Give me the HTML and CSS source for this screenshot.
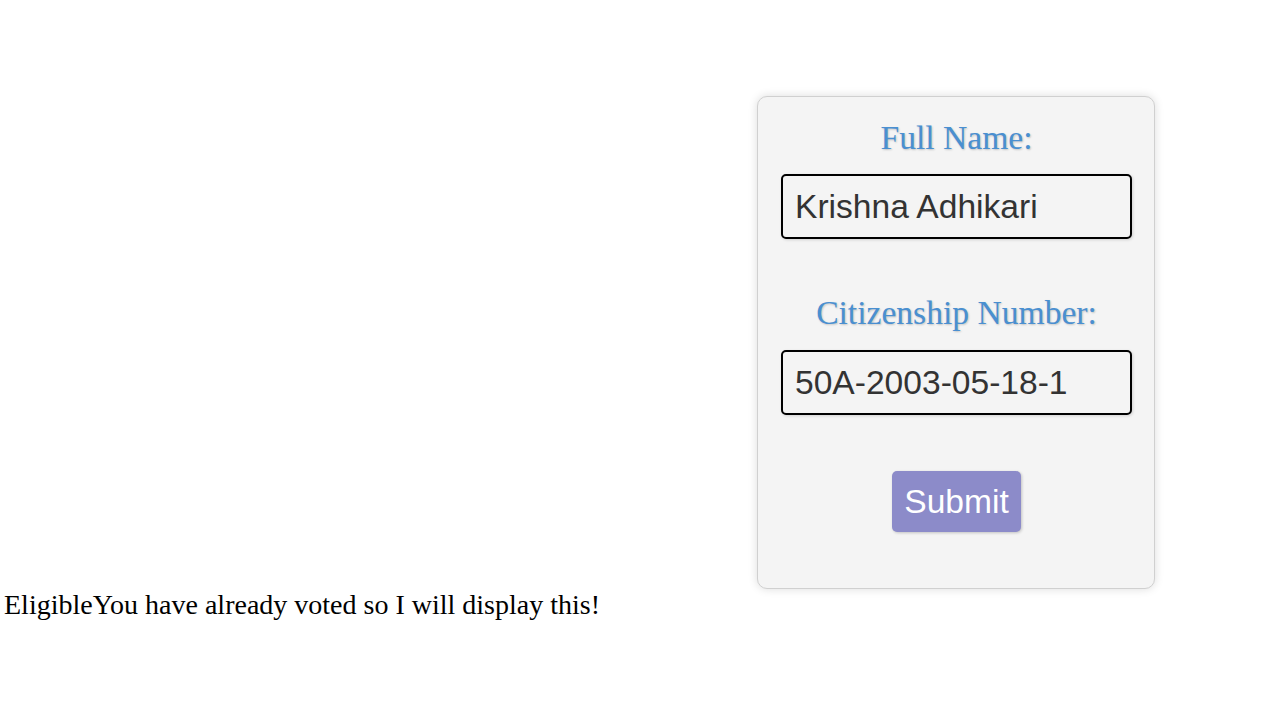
FILE: index.html
```html
<!DOCTYPE html>
<html lang="en">
<head>
<meta charset="utf-8">
<title>Voter Check</title>
<link rel="stylesheet" href="styles.css">
</head>
<body>
<main class="page">
  <div class="stage">
    <form class="card">
      <label class="label" for="name">Full Name:</label>
      <input class="field" id="name" type="text" value="Krishna Adhikari">
      <label class="label label-next" for="cit">Citizenship Number:</label>
      <input class="field" id="cit" type="text" value="50A-2003-05-18-1">
      <div class="actions">
        <button class="submit" type="button">Submit</button>
      </div>
    </form>
  </div>
  <p class="status">EligibleYou have already voted so I will display this!</p>
</main>
</body>
</html>
```
FILE: styles.css
```css
html, body {
  margin: 0;
  padding: 0;
  background: #ffffff;
}

.page {
  font-family: "Liberation Serif", "Times New Roman", serif;
}

.stage {
  display: flex;
  justify-content: flex-end;
  padding: 96px 106px 0 0;
}

.card {
  box-sizing: border-box;
  width: 398px;
  height: 493px;
  padding: 22px 22px 0 23px;
  background: #f4f4f4;
  border: 1px solid #d0d0d0;
  border-radius: 10px;
  box-shadow: 0 0 10px rgba(0, 0, 0, 0.14);
  display: flex;
  flex-direction: column;
}

.label {
  display: block;
  text-align: center;
  font-family: "Liberation Serif", "Times New Roman", serif;
  font-size: 33.6px;
  line-height: 37px;
  color: #4a8fd0;
  text-shadow: 1px 1px 2px rgba(0, 0, 0, 0.2);
  margin-bottom: 18px;
}

.label-next {
  margin-top: 55px;
  margin-bottom: 19px;
}

.field {
  box-sizing: border-box;
  width: 351px;
  height: 65px;
  margin: 0;
  padding: 0 12px;
  font-family: "Liberation Sans", Arial, sans-serif;
  font-size: 33.6px;
  color: #333333;
  background: #f4f4f4;
  border: 2px solid #000000;
  border-radius: 5px;
  box-shadow: 1px 1px 3px rgba(0, 0, 0, 0.15);
  outline: none;
}

.actions {
  display: flex;
  justify-content: center;
  margin-top: 56px;
}

.submit {
  box-sizing: border-box;
  width: 129px;
  height: 61px;
  padding: 0;
  font-family: "Liberation Sans", Arial, sans-serif;
  font-size: 33.6px;
  color: #ffffff;
  background: #8c8bc9;
  border: none;
  border-radius: 5px;
  box-shadow: 1px 1px 3px rgba(0, 0, 0, 0.2);
  cursor: pointer;
}

.status {
  margin: 0;
  padding-left: 4px;
  font-size: 28px;
  line-height: 32px;
  color: #000000;
}
```
